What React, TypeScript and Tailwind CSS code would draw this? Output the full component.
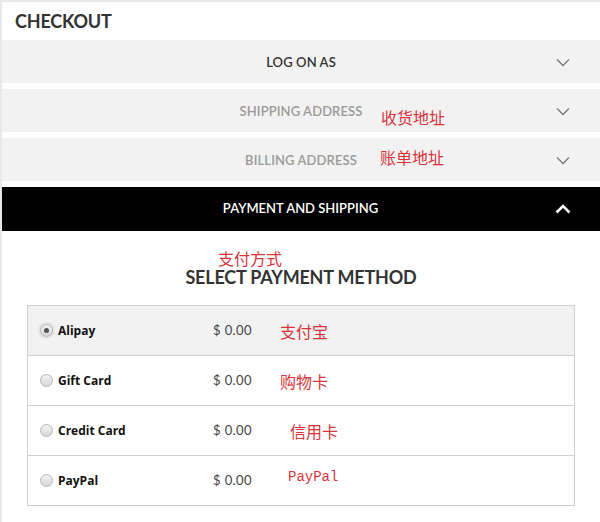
import React from "react";

const Chevron = ({ up = false, white = false }: { up?: boolean; white?: boolean }) => (
  <svg width="16" height="10" viewBox="0 0 16 10" className="block">
    <path
      d={up ? "M1.5 8.5 L8 2 L14.5 8.5" : "M2 1.5 L8 7.5 L14 1.5"}
      fill="none"
      stroke={white ? "#ffffff" : "#7a7a7a"}
      strokeWidth={white ? 2.6 : 1.3}
    />
  </svg>
);

const Section = ({
  title,
  note,
  noteClass,
  muted,
}: {
  title: string;
  note?: string;
  noteClass?: string;
  muted?: boolean;
}) => (
  <div className="relative h-[43px] bg-[#f2f2f2] flex items-center justify-center pt-[2px]">
    <span
      className={`text-[13px] font-semibold tracking-[0.1px] ${muted ? "text-[#9a9a9a]" : "text-[#333]"}`}
      style={{ fontFamily: "Lato, sans-serif" }}
    >
      {title}
    </span>
    {note && (
      <span
        className={`absolute text-[16px] leading-[20px] text-[#d6343a] ${noteClass}`}
        style={{ fontFamily: '"Noto Sans CJK SC", sans-serif' }}
      >
        {note}
      </span>
    )}
    <div className="absolute right-[29px] top-[18px]">
      <Chevron />
    </div>
  </div>
);

const Radio = ({ checked }: { checked?: boolean }) => (
  <span
    className={`relative inline-flex w-[13px] h-[13px] rounded-full border border-[#b5b5b5] bg-gradient-to-b from-[#f4f4f4] to-[#d6d6d6] items-center justify-center ${
      checked ? "shadow-[0_0_0_2px_#e3e3e3]" : ""
    }`}
  >
    {checked && <span className="w-[5px] h-[5px] rounded-full bg-[#555]" />}
  </span>
);

const rows = [
  { label: "Alipay", note: "支付宝", noteClass: "ml-0", checked: true, bg: "bg-[#f2f2f2]", cjk: true },
  { label: "Gift Card", note: "购物卡", noteClass: "ml-0", bg: "bg-white", cjk: true },
  { label: "Credit Card", note: "信用卡", noteClass: "ml-[10px]", bg: "bg-white", cjk: true },
  { label: "PayPal", note: "PayPal", noteClass: "ml-[8px]", bg: "bg-white", cjk: false },
];

export default function App() {
  return (
    <div className="w-[600px] h-[522px] bg-white border-t-2 border-l-2 border-[#e8e8e8] overflow-hidden">
      <div className="h-[38px] pl-[13px] flex items-center">
        <h1
          className="text-[18px] font-bold text-[#333] leading-none tracking-[-0.2px]"
          style={{ fontFamily: "Lato, sans-serif" }}
        >
          CHECKOUT
        </h1>
      </div>
      <div className="flex flex-col gap-[6px]">
        <Section title="LOG ON AS" />
        <Section title="SHIPPING ADDRESS" note="收货地址" noteClass="left-[379px] top-[18px]" muted />
        <Section title="BILLING ADDRESS" note="账单地址" noteClass="left-[378px] top-[9px]" muted />
        <div className="relative h-[44px] bg-black flex items-center justify-center -ml-[1px]">
          <span
            className="text-[13px] font-semibold text-white"
            style={{ fontFamily: "Lato, sans-serif" }}
          >
            PAYMENT AND SHIPPING
          </span>
          <div className="absolute right-[29px] top-[17px]">
            <Chevron up white />
          </div>
        </div>
      </div>
      <div className="pt-[17px]">
        <div
          className="pl-[216px] text-[16px] leading-[20px] text-[#d6343a]"
          style={{ fontFamily: '"Noto Sans CJK SC", sans-serif' }}
        >
          支付方式
        </div>
        <h2
          className="text-center text-[18px] font-bold text-[#333] leading-[20px] -mt-[1px] tracking-[-0.2px]"
          style={{ fontFamily: "Lato, sans-serif" }}
        >
          SELECT PAYMENT METHOD
        </h2>
      </div>
      <div className="mt-[18px] ml-[25px] w-[548px] border border-[#cfcfcf]">
        {rows.map((r, i) => (
          <div
            key={r.label}
            className={`flex items-center ${r.bg} ${i > 0 ? "h-[50px] border-t border-[#cfcfcf]" : "h-[49px]"}`}
          >
            <div className="w-[12px]" />
            <Radio checked={r.checked} />
            <span
              className="ml-[5px] w-[155px] text-[12px] font-bold text-[#111]"
              style={{ fontFamily: '"Open Sans", sans-serif' }}
            >
              {r.label}
            </span>
            <span
              className="w-[67px] text-[13px] text-[#444] tracking-[0.4px]"
              style={{ fontFamily: "Lato, sans-serif" }}
            >
              $ 0.00
            </span>
            <span
              className={`${r.noteClass} ${r.cjk ? "text-[16px]" : "text-[14px] -mt-[6px]"} text-[#d6343a]`}
              style={{
                fontFamily: r.cjk ? '"Noto Sans CJK SC", sans-serif' : '"Liberation Mono", monospace',
              }}
            >
              {r.note}
            </span>
          </div>
        ))}
      </div>
    </div>
  );
}
